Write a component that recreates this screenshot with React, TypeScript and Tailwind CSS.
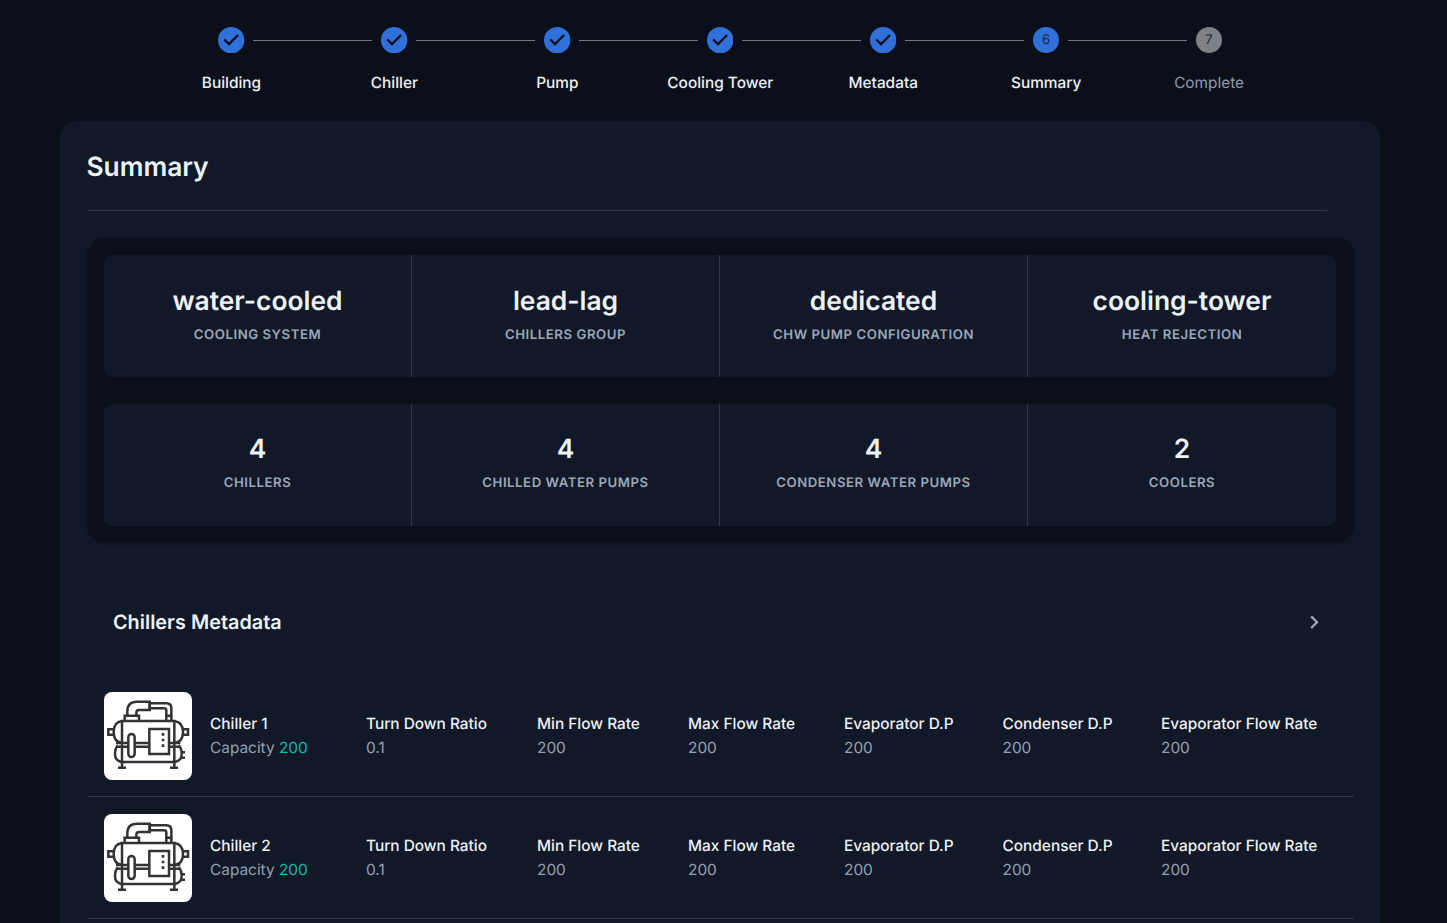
import React from "react";

const steps = ["Building", "Chiller", "Pump", "Cooling Tower", "Metadata", "Summary", "Complete"];
const ACTIVE = 5;

const statRows = [
  [
    ["water-cooled", "Cooling System"],
    ["lead-lag", "Chillers Group"],
    ["dedicated", "CHW Pump Configuration"],
    ["cooling-tower", "Heat Rejection"],
  ],
  [
    ["4", "Chillers"],
    ["4", "Chilled Water Pumps"],
    ["4", "Condenser Water Pumps"],
    ["2", "Coolers"],
  ],
];

const chillers = ["Chiller 1", "Chiller 2"].map((name) => ({
  name,
  capacity: "200",
  fields: [
    ["Turn Down Ratio", "0.1"],
    ["Min Flow Rate", "200"],
    ["Max Flow Rate", "200"],
    ["Evaporator D.P", "200"],
    ["Condenser D.P", "200"],
    ["Evaporator Flow Rate", "200"],
  ],
}));

function StepIcon({ index }: { index: number }) {
  if (index < ACTIVE) {
    return (
      <svg viewBox="0 0 24 24" className="size-[26.4px] fill-[#3070d8]">
        <path d="M12 0a12 12 0 1 0 0 24 12 12 0 0 0 0-24zm-2 17l-5-5 1.4-1.4 3.6 3.6 7.6-7.6L19 8l-9 9z" />
      </svg>
    );
  }
  return (
    <span
      className={`flex size-[26.4px] items-center justify-center rounded-full pt-[1.4px] text-[13.2px] leading-none text-[#1c2536] ${
        index === ACTIVE ? "bg-[#3070d8]" : "bg-[#808186]"
      }`}
    >
      {index + 1}
    </span>
  );
}

function Stepper() {
  return (
    <ol className="ml-[150px] flex w-[1140.6px] pt-[26.6px]">
      {steps.map((label, i) => (
        <li key={label} className="relative flex flex-1 flex-col items-center">
          {i > 0 && (
            <span className="absolute top-[13px] right-[calc(50%+22.2px)] left-[calc(-50%+21.8px)] h-px bg-[#757478]" />
          )}
          <StepIcon index={i} />
          <span
            className={`mt-[18px] text-[15.4px] leading-[24px] ${
              i > ACTIVE ? "font-normal text-[#8e9aac]" : "font-medium text-[#edf2f7]"
            }`}
          >
            {label}
          </span>
        </li>
      ))}
    </ol>
  );
}

function ChillerPicture() {
  return (
    <svg viewBox="24 24 264 264" className="size-[88px] rounded-[8px] bg-white">
      <g fill="none" stroke="#333333" strokeWidth="7.5">
        <path d="M94 95V82Q94 53 123 53H161V78H129Q121 78 121 87V95" />
        <path d="M161 58H211Q226 58 226 73V108M161 73H205Q211 73 211 80V108" />
        <path d="M161 51V81" />
        <path d="M86 108V95H129V108M208 95H229" />
        <path d="M78 111H235V234H78Z" />
        <path d="M78 111Q53 114 53 144Q53 174 78 177M235 111Q261 114 261 144Q261 174 235 177" />
        <path d="M53 136H37V152H53M261 136H276V152H261" />
        <path d="M60 177H96M60 188H96M117 177H158M117 188H158M221 177H253M221 188H253" />
        <path d="M66 184Q57 192 57 211Q57 231 78 234M248 184Q257 192 257 211Q257 231 235 234" />
        <path d="M257 205H267M257 221H267" />
        <path d="M78 234V251M235 234V251M66 251H90M222 251H246" />
        <rect x="97" y="150" width="19" height="69" rx="9.5" fill="#fff" />
        <rect x="160" y="135" width="59" height="75" fill="#fff" />
      </g>
      <path d="M197 147h8v8h-8zM197 164h8v8h-8zM197 181h8v8h-8z" fill="#333333" />
    </svg>
  );
}

export default function App() {
  return (
    <div className="flex h-[923px] flex-col overflow-hidden bg-[#0b0f19] font-['Inter',sans-serif] text-[#edf2f7] antialiased [text-rendering:geometricPrecision]">
      <Stepper />
      <main className="mt-[25.6px] ml-[60px] w-[1320px] grow rounded-t-[18px] bg-[#111827] pr-[26px] pl-[27px]">
        <h1 className="-ml-[0.5px] pt-[29px] text-[26.4px] leading-[34px] font-semibold tracking-[-0.05px]">Summary</h1>
        <hr className="mt-[26px] mr-[27px] border-[#2d3748]" />
        <section className="mt-[27px] flex flex-col gap-[27px] rounded-[18px] bg-[#0b0f19] p-[17px] pr-[18px] shadow-[0_1px_4px_rgba(0,0,0,0.2)]">
          {statRows.map((row, r) => (
            <div key={r} className="grid h-[122px] grid-cols-4 divide-x divide-[#2d3748] rounded-[9px] bg-[#111827]">
              {row.map(([value, label]) => (
                <div key={label} className={`flex flex-col items-center ${r === 0 ? "pt-[30px]" : "pt-[29px]"}`}>
                  <span className="text-[26.4px] leading-[32px] font-semibold">{value}</span>
                  <span className="mt-[2px] text-[13.2px] leading-[32px] font-semibold tracking-[0.55px] text-[#9ca8ba] uppercase">
                    {label}
                  </span>
                </div>
              ))}
            </div>
          ))}
        </section>
        <header className="mt-[35px] flex h-[88px] items-center justify-between pr-[27px] pl-[26px]">
          <h2 className="text-[19.8px] leading-[24px] font-semibold tracking-[0.03px]">Chillers Metadata</h2>
          <svg viewBox="0 0 24 24" className="mt-[2px] size-[26.4px] fill-[#a3abb9]">
            <path d="M8.59 16.59 13.17 12 8.59 7.41 10 6l6 6-6 6z" />
          </svg>
        </header>
        <ul className="mt-[9px]">
          {chillers.map((c) => (
            <li
              key={c.name}
              className="grid h-[122px] grid-cols-[106px_156px_171px_151px_156px_158.5px_158.5px_1fr] items-center border-b border-[#2d3748] pt-px pl-[17px] text-[15.4px] leading-[24px] whitespace-nowrap"
            >
              <ChillerPicture />
              <div>
                <p className="font-medium">{c.name}</p>
                <p className="text-[#94a0b2]">
                  Capacity <span className="text-[#14b8a6]">{c.capacity}</span>
                </p>
              </div>
              {c.fields.map(([label, value]) => (
                <div key={label}>
                  <p className="font-medium">{label}</p>
                  <p className="text-[#94a0b2]">{value}</p>
                </div>
              ))}
            </li>
          ))}
        </ul>
      </main>
    </div>
  );
}
